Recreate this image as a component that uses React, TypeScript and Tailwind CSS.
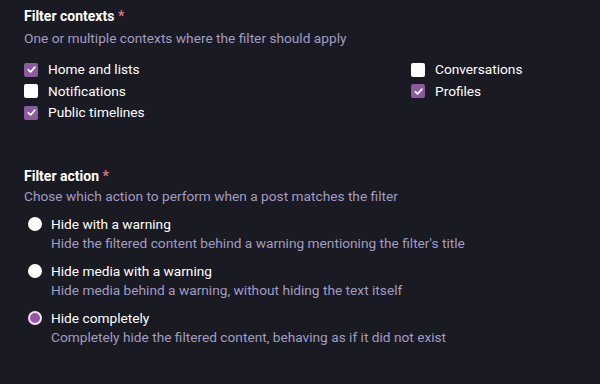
import React, { useState } from 'react'

const contexts = [
  { id: 'home', label: 'Home and lists' },
  { id: 'conv', label: 'Conversations' },
  { id: 'notif', label: 'Notifications' },
  { id: 'profiles', label: 'Profiles' },
  { id: 'public', label: 'Public timelines' },
]

const actions = [
  { id: 'warn', label: 'Hide with a warning', hint: "Hide the filtered content behind a warning mentioning the filter's title" },
  { id: 'blur', label: 'Hide media with a warning', hint: 'Hide media behind a warning, without hiding the text itself' },
  { id: 'hide', label: 'Hide completely', hint: 'Completely hide the filtered content, behaving as if it did not exist' },
]

function Checkbox({ checked }: { checked: boolean }) {
  return (
    <span
      className={`w-[14px] h-[14px] rounded-[2px] flex items-center justify-center shrink-0 ${
        checked ? 'bg-[#8c5a9e]' : 'bg-white'
      }`}
    >
      {checked && (
        <svg viewBox="0 0 12 12" className="w-[11px] h-[11px]" fill="none">
          <path d="M2.4 6.2 L5 8.7 L9.7 3.5" stroke="#fff" strokeWidth="1.9" strokeLinecap="round" strokeLinejoin="round" />
        </svg>
      )}
    </span>
  )
}

function Radio({ checked }: { checked: boolean }) {
  return checked ? (
    <span className="w-[14px] h-[14px] rounded-full border-[2.5px] border-[#f3def2] bg-[#9556a6] shrink-0" />
  ) : (
    <span className="w-[14px] h-[14px] rounded-full bg-white shrink-0" />
  )
}

export default function App() {
  const [selected, setSelected] = useState<Record<string, boolean>>({
    home: true,
    conv: false,
    notif: false,
    profiles: true,
    public: true,
  })
  const [action, setAction] = useState('hide')

  return (
    <div
      className="w-[600px] h-[384px] bg-[#1a1a23] text-white px-6 pt-[6px] overflow-hidden"
      style={{ fontFamily: 'Roboto, "Liberation Sans", sans-serif' }}
    >
      <div className="text-sm font-bold leading-5">
        Filter contexts <span className="text-[#d9758a]">*</span>
      </div>
      <div className="text-[13.7px] leading-5 mt-[2px] text-[#a19dc2]">
        One or multiple contexts where the filter should apply
      </div>

      <div className="grid grid-cols-[387px_1fr] mt-[11px]">
        {contexts.map((c) => (
          <label
            key={c.id}
            className="flex items-center gap-[10px] h-[21.5px] text-[13.7px] cursor-pointer"
            onClick={() => setSelected((s) => ({ ...s, [c.id]: !s[c.id] }))}
          >
            <Checkbox checked={selected[c.id]} />
            <span>{c.label}</span>
          </label>
        ))}
      </div>

      <div className="text-sm font-bold leading-5 mt-[42px]">
        Filter action <span className="text-[#d9758a]">*</span>
      </div>
      <div className="text-[13.7px] leading-5 text-[#a19dc2]">
        Chose which action to perform when a post matches the filter
      </div>

      <div className="flex flex-col gap-[8px] mt-2 pl-[4px]">
        {actions.map((a) => (
          <div key={a.id} className="flex gap-[9px] cursor-pointer" onClick={() => setAction(a.id)}>
            <div className="h-5 flex items-center">
              <Radio checked={action === a.id} />
            </div>
            <div className="flex flex-col">
              <span className="text-[13.7px] leading-5">{a.label}</span>
              <span className="text-[13.7px] leading-[19px] text-[#a19dc2]">{a.hint}</span>
            </div>
          </div>
        ))}
      </div>
    </div>
  )
}
